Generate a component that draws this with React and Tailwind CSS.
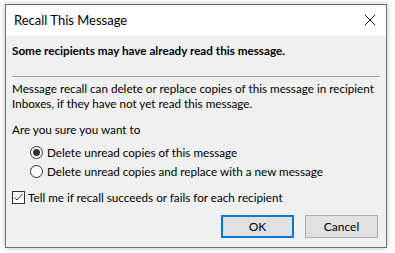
export default function App() {
  return (
    <div className="h-[253px] w-[395px] bg-white pl-[5px] pt-[4px]" style={{ fontFamily: 'Lato, "Noto Sans", sans-serif' }}>
      <div className="flex h-[244px] w-[382px] flex-col border border-[#6f6f6f] bg-[#f0f0f0] text-[11.7px] text-black shadow-[0_0_6px_rgba(0,0,0,0.25)]">
        {/* Title bar */}
        <div className="flex h-[30px] items-center justify-between bg-white pl-[8px] pr-[8px]">
          <span className="text-[13px] leading-none">Recall This Message</span>
          <svg width="12" height="12" viewBox="0 0 12 12" className="mr-[2px]">
            <path d="M1 1 L11 11 M11 1 L1 11" stroke="#111" strokeWidth="1" />
          </svg>
        </div>

        <div className="flex flex-1 flex-col px-[6px]">
          <p className="mt-[7px] font-bold leading-[16px]">Some recipients may have already read this message.</p>
          <div className="mt-[18px] h-px bg-[#a0a0a0]" />
          <p className="mt-[4px] whitespace-nowrap leading-[15px]">
            Message recall can delete or replace copies of this message in recipient
            <br />
            Inboxes, if they have not yet read this message.
          </p>
          <p className="mt-[11px] leading-[15px]">Are you sure you want to</p>

          <div className="mt-[8px] flex flex-col gap-[4px] pl-[18px]">
            <label className="flex items-center gap-[4px]">
              <span className="flex h-[13px] w-[13px] items-center justify-center rounded-full border border-[#333] bg-white">
                <span className="h-[7px] w-[7px] rounded-full bg-[#333]" />
              </span>
              <span className="leading-[15px]">Delete unread copies of this message</span>
            </label>
            <label className="flex items-center gap-[4px]">
              <span className="h-[13px] w-[13px] rounded-full border border-[#333] bg-white" />
              <span className="leading-[15px]">Delete unread copies and replace with a new message</span>
            </label>
          </div>

          <label className="mt-[11px] flex items-center gap-[3px]">
            <span className="flex h-[13px] w-[13px] items-center justify-center border border-[#333] bg-white">
              <svg width="11" height="11" viewBox="0 0 11 11">
                <path d="M1.5 5.5 L4 8 L9.5 2" stroke="#333" strokeWidth="1" fill="none" />
              </svg>
            </span>
            <span className="leading-[15px]">Tell me if recall succeeds or fails for each recipient</span>
          </label>

          <div className="mt-[10px] flex justify-end gap-[11px] pr-[2px]">
            <button className="h-[23px] w-[73px] border-2 border-[#0078d7] bg-[#e1e1e1] text-[12px] leading-none">OK</button>
            <button className="h-[23px] w-[73px] border border-[#adadad] bg-[#e1e1e1] text-[12px] leading-none">Cancel</button>
          </div>
        </div>
      </div>
    </div>
  );
}
